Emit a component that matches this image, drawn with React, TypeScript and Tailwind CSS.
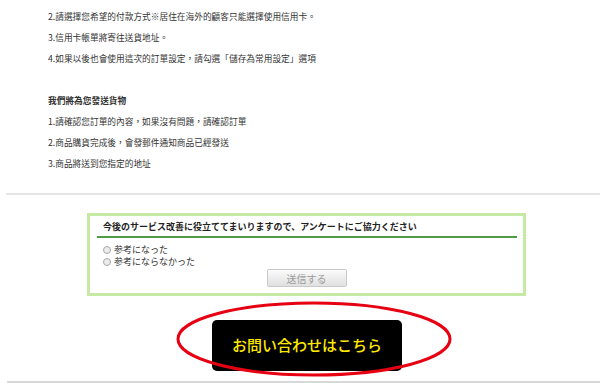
import React from "react";

export default function App() {
  const tc = "font-[family-name:'Noto_Sans_CJK_TC','Noto_Sans_CJK_JP',sans-serif]";
  const jp = "font-[family-name:'Noto_Sans_CJK_JP','Noto_Sans_CJK_TC',sans-serif]";
  return (
    <div className="relative w-[600px] h-[383px] overflow-hidden bg-white">
      <div className={`${tc} pl-[48px] pt-[6px] text-[8.7px] leading-[21px] text-[#333]`}>
        <div>2.請選擇您希望的付款方式※居住在海外的顧客只能選擇使用信用卡。</div>
        <div>3.信用卡帳單將寄往送貨地址。</div>
        <div>4.如果以後也會使用這次的訂單設定，請勾選「儲存為常用設定」選項</div>
        <div className="h-[21px]"></div>
        <div className="font-bold">我們將為您發送貨物</div>
        <div>1.請確認您訂單的內容，如果沒有問題，請確認訂單</div>
        <div>2.商品購貨完成後，會發郵件通知商品已經發送</div>
        <div>3.商品將送到您指定的地址</div>
      </div>

      <div className="mt-[19px] ml-[6px] h-[2px] bg-[#e4e4e4]"></div>

      <div className={`${jp} mt-[18px] ml-[87px] w-[439px] h-[83px] border-[3px] border-[#c6e9a4] text-[#222]`}>
        <div className="ml-[7px] mr-[6px]">
          <div className="pt-[4px] pl-[6px] text-[9px] leading-[14px] font-semibold">
            今後のサービス改善に役立ててまいりますので、アンケートにご協力ください
          </div>
          <div className="mt-[2px] h-[2px] bg-[#4f9c44]"></div>
          <div className="mt-[6px] pl-[6px] text-[9px] leading-[12px] text-[#333]">
            <div className="flex items-center gap-[3px]">
              <span className="w-[8px] h-[8px] rounded-full border border-[#a8a8a8] bg-[#ececec]"></span>
              <span>参考になった</span>
            </div>
            <div className="flex items-center gap-[3px]">
              <span className="w-[8px] h-[8px] rounded-full border border-[#a8a8a8] bg-[#ececec]"></span>
              <span>参考にならなかった</span>
            </div>
          </div>
        </div>
        <div className="mt-[1px] flex justify-center">
          <div className="w-[80px] h-[18px] flex items-center justify-center rounded-[2px] border border-[#c9c9c9] bg-gradient-to-b from-[#fbfbfb] to-[#e0e0e0] text-[10px] text-[#9a9a9a]">
            送信する
          </div>
        </div>
      </div>

      <div className={`${jp} mt-[24px] ml-[212px] w-[190px] h-[51px] rounded-[5px] bg-black flex items-center justify-center text-[15px] font-medium text-[#ffea00]`}>
        お問い合わせはこちら
      </div>

      <div className="mt-[10px] ml-[7px] h-[2px] bg-[#d8d8d8]"></div>

      <svg className="absolute left-[175px] top-[301px]" width="278" height="76" viewBox="0 0 278 76">
        <ellipse cx="139" cy="38" rx="136" ry="36" fill="none" stroke="#e60012" strokeWidth="3" />
      </svg>
    </div>
  );
}
